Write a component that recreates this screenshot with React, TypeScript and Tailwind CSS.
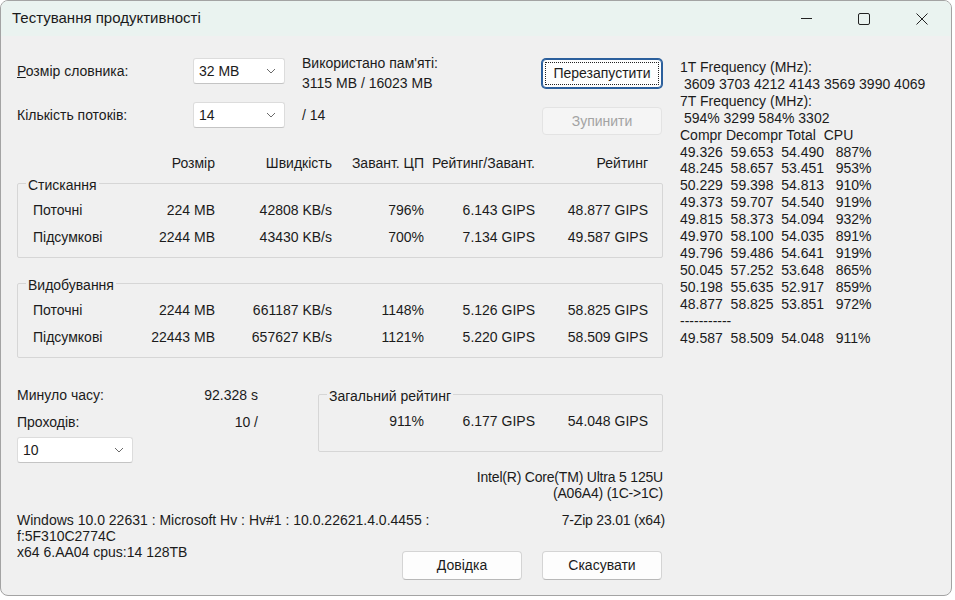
import React from "react";

const compress = [
  ["Поточні", "224 MB", "42808 KB/s", "796%", "6.143 GIPS", "48.877 GIPS"],
  ["Підсумкові", "2244 MB", "43430 KB/s", "700%", "7.134 GIPS", "49.587 GIPS"],
];

const decompress = [
  ["Поточні", "2244 MB", "661187 KB/s", "1148%", "5.126 GIPS", "58.825 GIPS"],
  ["Підсумкові", "22443 MB", "657627 KB/s", "1121%", "5.220 GIPS", "58.509 GIPS"],
];

const log = [
  "1T Frequency (MHz):",
  " 3609 3703 4212 4143 3569 3990 4069",
  "7T Frequency (MHz):",
  " 594% 3299 584% 3302",
  "Compr Decompr Total  CPU",
  "49.326  59.653  54.490   887%",
  "48.245  58.657  53.451   953%",
  "50.229  59.398  54.813   910%",
  "49.373  59.707  54.540   919%",
  "49.815  58.373  54.094   932%",
  "49.970  58.100  54.035   891%",
  "49.796  59.486  54.641   919%",
  "50.045  57.252  53.648   865%",
  "50.198  55.635  52.917   859%",
  "48.877  58.825  53.851   972%",
  "-----------",
  "49.587  58.509  54.048   911%",
];

function Chevron() {
  return (
    <svg width="10" height="6" viewBox="0 0 10 6" fill="none">
      <path d="M1 1l4 4 4-4" stroke="#6a6a6a" strokeWidth="1" />
    </svg>
  );
}

function Combo({ value, className }: { value: string; className: string }) {
  return (
    <div
      className={`${className} h-[26px] flex items-center justify-between bg-white border border-[#dcdcdc] border-b-[#c4c4c4] rounded-[3px] pl-[5px] pr-[8px]`}
    >
      <span>{value}</span>
      <Chevron />
    </div>
  );
}

function Group({
  title,
  className,
  children,
}: {
  title: string;
  className: string;
  children: React.ReactNode;
}) {
  return (
    <fieldset className={`border border-[#d6d6d6] rounded-[2px] ${className}`}>
      <legend className="ml-[8px] px-[2px] pt-[4px] leading-[16px]">{title}</legend>
      {children}
    </fieldset>
  );
}

function Rows({ data }: { data: string[][] }) {
  return (
    <div className="pl-[15px] pt-[4px] pb-[6px]">
      {data.map((row, i) => (
        <div
          key={i}
          className="grid grid-cols-[102px_80px_117px_92px_111px_113px] h-[27px] items-center"
        >
          {row.map((c, j) => (
            <span key={j} className={j === 0 ? "" : "text-right"}>
              {c}
            </span>
          ))}
        </div>
      ))}
    </div>
  );
}

function Button({ children, className = "" }: { children: React.ReactNode; className?: string }) {
  return (
    <div
      className={`w-[120px] h-[29px] flex items-center justify-center bg-[#fdfdfd] border border-[#d4d4d4] border-b-[#b8b8b8] rounded-[4px] ${className}`}
    >
      {children}
    </div>
  );
}

const App = () => {
  return (
    <div className="w-[955px] h-[600px] bg-white font-['Liberation_Sans',Arial,sans-serif] text-[14px] text-[#1b1b1b]">
      <div className="w-[952px] h-[596px] border border-[#a3a3a3] rounded-[8px] overflow-hidden bg-[#f0f0f0] flex flex-col">
        {/* title bar */}
        <div className="h-[35px] bg-[#eaf3f0] flex items-center shrink-0">
          <span className="pl-[11px] text-[15px] text-[#1a1a1a] flex-1">Тестування продуктивності</span>
          <div className="flex h-full">
            <div className="w-[58px] h-full flex items-center justify-center">
              <svg width="11" height="11" viewBox="0 0 11 11">
                <path d="M0 5.5h11" stroke="#222" strokeWidth="1" />
              </svg>
            </div>
            <div className="w-[58px] h-full flex items-center justify-center">
              <svg width="12" height="12" viewBox="0 0 12 12" fill="none">
                <rect x="0.5" y="0.5" width="11" height="11" rx="1.5" stroke="#222" strokeWidth="1" />
              </svg>
            </div>
            <div className="w-[58px] h-full flex items-center justify-center">
              <svg width="12" height="12" viewBox="0 0 12 12" fill="none">
                <path d="M0.5 0.5l11 11M11.5 0.5l-11 11" stroke="#222" strokeWidth="1" />
              </svg>
            </div>
          </div>
        </div>

        {/* body */}
        <div className="flex flex-1">
          <div className="w-[679px] pl-[16px] shrink-0">
            {/* top controls */}
            <div className="flex pt-[17px]">
              <div className="w-[525px]">
                <div className="flex items-start h-[40px]">
                  <div className="w-[176px] h-[26px] mt-[5px] flex items-center">
                    <span>
                      <span className="underline">Р</span>озмір словника:
                    </span>
                  </div>
                  <Combo value="32 MB" className="w-[92px] mt-[5px]" />
                  <div className="ml-[17px] leading-[20px]">
                    <div>Використано пам'яті:</div>
                    <div>3115 MB / 16023 MB</div>
                  </div>
                </div>
                <div className="flex items-center mt-[9px]">
                  <div className="w-[176px]">Кількість потоків:</div>
                  <Combo value="14" className="w-[92px]" />
                  <div className="ml-[17px]">/ 14</div>
                </div>
              </div>
              <div className="flex flex-col">
                <div className="w-[120px] h-[29px] mt-[6px] p-[2px] bg-[#fdfdfd] border border-[#2b5f9c] rounded-[4px] ring-1 ring-[#2b5f9c]">
                  <div className="w-full h-full flex items-center justify-center border border-dotted border-[#222]">
                    Перезапустити
                  </div>
                </div>
                <div className="w-[120px] h-[28px] mt-[19px] flex items-center justify-center bg-[#f5f5f5] border border-[#e3e3e3] rounded-[4px] text-[#a3a3a3]">
                  Зупинити
                </div>
              </div>
            </div>

            {/* header */}
            <div className="grid grid-cols-[118px_80px_117px_92px_111px_113px] mt-[18px] leading-[20px]">
              <span />
              <span className="text-right">Розмір</span>
              <span className="text-right">Швидкість</span>
              <span className="text-right whitespace-nowrap">Завант. ЦП</span>
              <span className="text-right whitespace-nowrap">Рейтинг/Завант.</span>
              <span className="text-right">Рейтинг</span>
            </div>

            <Group title="Стискання" className="w-[646px]">
              <Rows data={compress} />
            </Group>

            <Group title="Видобування" className="w-[646px] mt-[15px]">
              <Rows data={decompress} />
            </Group>

            {/* lower part */}
            <div className="flex items-start mt-[26px]">
              <div className="w-[241px] flex flex-col">
                <div className="flex justify-between leading-[20px] mt-[1px]">
                  <span>Минуло часу:</span>
                  <span>92.328 s</span>
                </div>
                <div className="flex justify-between leading-[20px] mt-[7px]">
                  <span>Проходів:</span>
                  <span>10 /</span>
                </div>
                <Combo value="10" className="w-[116px] mt-[5px]" />
              </div>
              <Group title="Загальний рейтинг" className="w-[345px] ml-[60px]">
                <div className="grid grid-cols-[105px_111px_113px] h-[27px] items-center mt-[4px] mb-[16px]">
                  <span className="text-right">911%</span>
                  <span className="text-right">6.177 GIPS</span>
                  <span className="text-right">54.048 GIPS</span>
                </div>
              </Group>
            </div>

            <div className="w-[646px] text-right leading-[16px] mt-[6px] tracking-[-0.2px]">
              <div>Intel(R) Core(TM) Ultra 5 125U</div>
              <div>(A06A4) (1C-&gt;1C)</div>
            </div>

            <div className="flex w-[648px] mt-[11px]">
              <div className="flex-1 min-w-0 leading-[16px] whitespace-nowrap">
                <div>Windows 10.0 22631 : Microsoft Hv : Hv#1 : 10.0.22621.4.0.4455 :</div>
                <div>f:5F310C2774C</div>
                <div>x64 6.AA04 cpus:14 128TB</div>
              </div>
              <div className="flex flex-col items-end">
                <div className="leading-[16px] tracking-[-0.2px]">7-Zip 23.01 (x64)</div>
                <div className="flex gap-[20px] mt-[23px] mr-[3px]">
                  <Button>Довідка</Button>
                  <Button>Скасувати</Button>
                </div>
              </div>
            </div>
          </div>

          {/* right log */}
          <div className="pt-[23px] leading-[16.9px] whitespace-pre">
            {log.map((l, i) => (
              <div key={i}>{l}</div>
            ))}
          </div>
        </div>
      </div>
    </div>
  );
};

export default App;
